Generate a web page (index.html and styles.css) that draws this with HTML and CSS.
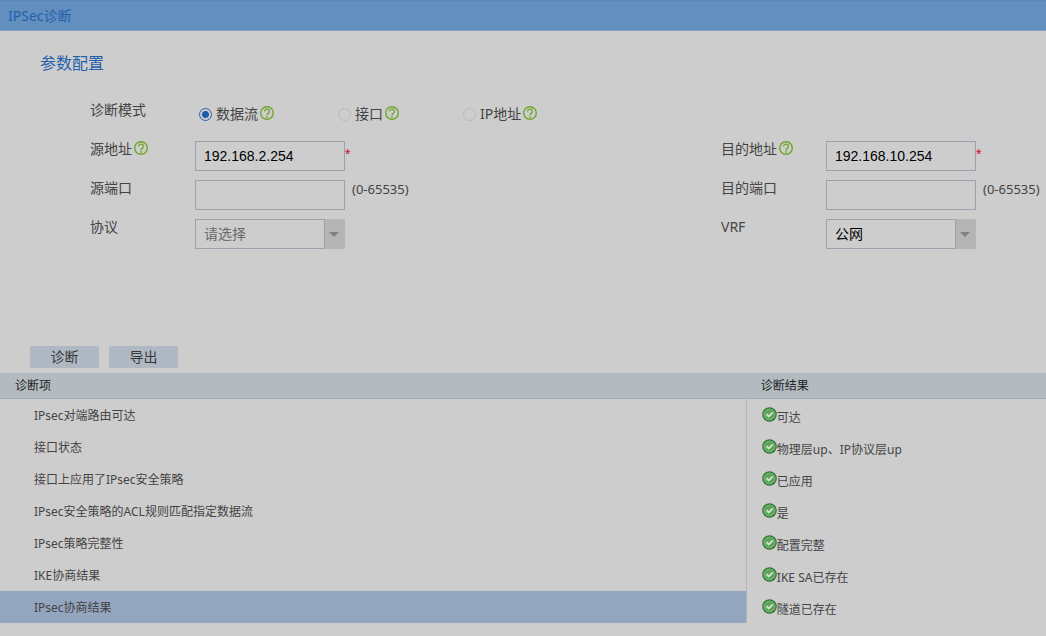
FILE: index.html
```
<!DOCTYPE html>
<html lang="zh-CN">
<head>
<meta charset="utf-8">
<title>IPSec诊断</title>
<link rel="stylesheet" href="styles.css">
</head>
<body>
<svg class="defs" aria-hidden="true">
  <symbol id="help" viewBox="0 0 14 14">
    <circle cx="7" cy="7" r="6.300" fill="none" stroke="#6fa629" stroke-width="1.400"/>
    <path d="M4.600 5.500a2.400 2.300 0 1 1 3.700 1.900C7.400 8 7 8.300 7 9.200" fill="none" stroke="#6fa629" stroke-width="1.300"/>
    <circle cx="7" cy="10.900" r=".9" fill="#6fa629"/>
  </symbol>
  <symbol id="ok" viewBox="0 0 15 15">
    <circle cx="7.500" cy="7.500" r="6.700" fill="#4f9850" stroke="#37773c" stroke-width="1.200"/>
    <circle cx="7.500" cy="7.500" r="5.300" fill="#5aa556" stroke="#8dbb87" stroke-width=".8"/>
    <path d="M4.500 7.200l2.200 2.200 4-4" fill="none" stroke="#d3dfd0" stroke-width="1.900"/>
  </symbol>
</svg>

<header class="titlebar">IPSec诊断</header>

<main>
  <form class="config">
    <h2 class="section-title">参数配置</h2>
    <div class="row">
      <span class="label" id="mode-label">诊断模式</span>
      <div class="options" role="radiogroup" aria-labelledby="mode-label">
        <label class="option"><input class="radio" type="radio" name="mode" checked>数据流<svg class="help"><use href="#help"/></svg></label>
        <label class="option"><input class="radio" type="radio" name="mode">接口<svg class="help"><use href="#help"/></svg></label>
        <label class="option"><input class="radio" type="radio" name="mode">IP地址<svg class="help"><use href="#help"/></svg></label>
      </div>
    </div>
    <div class="columns">
      <div class="column">
        <div class="row">
          <label class="label" for="src-ip">源地址<svg class="help"><use href="#help"/></svg></label>
          <input class="text" id="src-ip" type="text" value="192.168.2.254"><span class="required">*</span>
        </div>
        <div class="row">
          <label class="label" for="src-port">源端口</label>
          <input class="text" id="src-port" type="text"><span class="hint">(0-65535)</span>
        </div>
        <div class="row">
          <label class="label" for="protocol">协议</label>
          <span class="dropdown">
            <select class="select placeholder" id="protocol"><option>请选择</option></select>
            <span class="arrow"></span>
          </span>
        </div>
      </div>
      <div class="column">
        <div class="row">
          <label class="label" for="dst-ip">目的地址<svg class="help"><use href="#help"/></svg></label>
          <input class="text" id="dst-ip" type="text" value="192.168.10.254"><span class="required">*</span>
        </div>
        <div class="row">
          <label class="label" for="dst-port">目的端口</label>
          <input class="text" id="dst-port" type="text"><span class="hint">(0-65535)</span>
        </div>
        <div class="row">
          <label class="label" for="vrf">VRF</label>
          <span class="dropdown">
            <select class="select" id="vrf"><option>公网</option></select>
            <span class="arrow"></span>
          </span>
        </div>
      </div>
    </div>
  </form>

  <div class="actions">
    <button class="button" type="button">诊断</button>
    <button class="button" type="button">导出</button>
  </div>

  <table class="results">
    <thead>
      <tr><th class="item-head">诊断项</th><th>诊断结果</th></tr>
    </thead>
    <tbody>
      <tr><td class="item">IPsec对端路由可达</td><td><span class="result"><svg class="ok"><use href="#ok"/></svg><span class="result-text">可达</span></span></td></tr>
      <tr><td class="item">接口状态</td><td><span class="result"><svg class="ok"><use href="#ok"/></svg><span class="result-text">物理层up、IP协议层up</span></span></td></tr>
      <tr><td class="item">接口上应用了IPsec安全策略</td><td><span class="result"><svg class="ok"><use href="#ok"/></svg><span class="result-text">已应用</span></span></td></tr>
      <tr><td class="item">IPsec安全策略的ACL规则匹配指定数据流</td><td><span class="result"><svg class="ok"><use href="#ok"/></svg><span class="result-text">是</span></span></td></tr>
      <tr><td class="item">IPsec策略完整性</td><td><span class="result"><svg class="ok"><use href="#ok"/></svg><span class="result-text">配置完整</span></span></td></tr>
      <tr><td class="item">IKE协商结果</td><td><span class="result"><svg class="ok"><use href="#ok"/></svg><span class="result-text">IKE SA已存在</span></span></td></tr>
      <tr><td class="item selected">IPsec协商结果</td><td><span class="result"><svg class="ok"><use href="#ok"/></svg><span class="result-text">隧道已存在</span></span></td></tr>
    </tbody>
  </table>
</main>
</body>
</html>
```

FILE: styles.css
```
* { box-sizing: border-box; }

body {
  margin: 0;
  background: #cdcdcd;
  color: #444;
  font: 14px/16px "Noto Sans", "Noto Sans CJK SC", sans-serif;
}

.defs { display: none; }

.titlebar {
  height: 31px;
  padding: 0 8px;
  border-top: 1px solid #5a86b8;
  border-bottom: 1px solid #7d9dc2;
  background: #628fbe;
  color: #2460ab;
  line-height: 29px;
}

.config { padding: 20px 5px 97px 90px; }

.section-title {
  margin: 0 0 27px -50px;
  color: #2460ab;
  font-size: 16px;
  font-weight: 400;
  line-height: 24px;
}

.row {
  display: flex;
  align-items: flex-start;
}

.label {
  display: flex;
  align-items: center;
  flex: none;
  width: 105px;
  height: 16px;
}

.help {
  flex: none;
  width: 14px;
  height: 14px;
  margin: 0 0 2px 2px;
}

.options {
  display: flex;
  gap: 64px;
  height: 24px;
  padding-left: 4px;
}

.option {
  display: flex;
  align-items: center;
}

.radio {
  appearance: none;
  width: 13px;
  height: 13px;
  margin: 0 4px 0 0;
  border: 1px solid #bbb;
  border-radius: 50%;
}

.radio:checked {
  border-color: #2862ac;
  background: radial-gradient(circle, #1c5cab 0 3px, transparent 4px);
}

.columns {
  display: flex;
  justify-content: space-between;
  margin-top: 15px;
}

.column {
  display: grid;
  gap: 9px;
}

.column:last-child { width: 320px; }

.text,
.select {
  appearance: none;
  width: 150px;
  height: 30px;
  padding: 0 8px;
  border: 1px solid #9da1ad;
  border-radius: 0;
  background: transparent;
  color: #000;
  font: 14px "Liberation Sans", "Noto Sans CJK SC", sans-serif;
}

.placeholder { color: #6b6b6b; }

.required {
  color: #d8001c;
  font: 14px/26px "Liberation Sans", sans-serif;
}

.hint {
  padding-left: 7px;
  font-size: 13px;
  line-height: 18px;
}

.dropdown {
  position: relative;
  display: flex;
}

.arrow {
  position: absolute;
  top: 0;
  right: 0;
  display: grid;
  place-items: center;
  width: 21px;
  height: 30px;
  padding-right: 2px;
  border-left: 1px solid #9da1ad;
  background: #b5b5b6;
  pointer-events: none;
}

.arrow::before {
  content: "";
  border: 5px solid transparent;
  border-top: 5px solid #818181;
  border-bottom: 0;
}

.actions {
  display: flex;
  gap: 10px;
  padding: 0 30px 5px;
}

.button {
  width: 69px;
  height: 22px;
  padding: 0;
  border: 0;
  border-radius: 1px;
  background: #b0b8c4;
  color: #383838;
  font: inherit;
}

.results {
  width: 100%;
  border-collapse: separate;
  border-spacing: 0;
  table-layout: fixed;
  font-size: 12px;
}

.results th {
  height: 26px;
  padding: 0 14px;
  border-bottom: 1px solid #9faeb9;
  background: #b4bbc0;
  color: #222;
  font-weight: 400;
  text-align: left;
}

.results .item-head {
  width: 71.4%;
  padding-left: 15px;
}

.results td {
  height: 32px;
  padding: 2px 15px 0;
}

.results .item {
  padding-left: 34px;
  border-right: 1px solid #b0b5b9;
}

.results .selected { background: #93a5bf; }

.result {
  display: flex;
  align-items: flex-start;
}

.ok {
  flex: none;
  width: 15px;
  height: 15px;
}

.result-text {
  padding-top: 3px;
}
```
